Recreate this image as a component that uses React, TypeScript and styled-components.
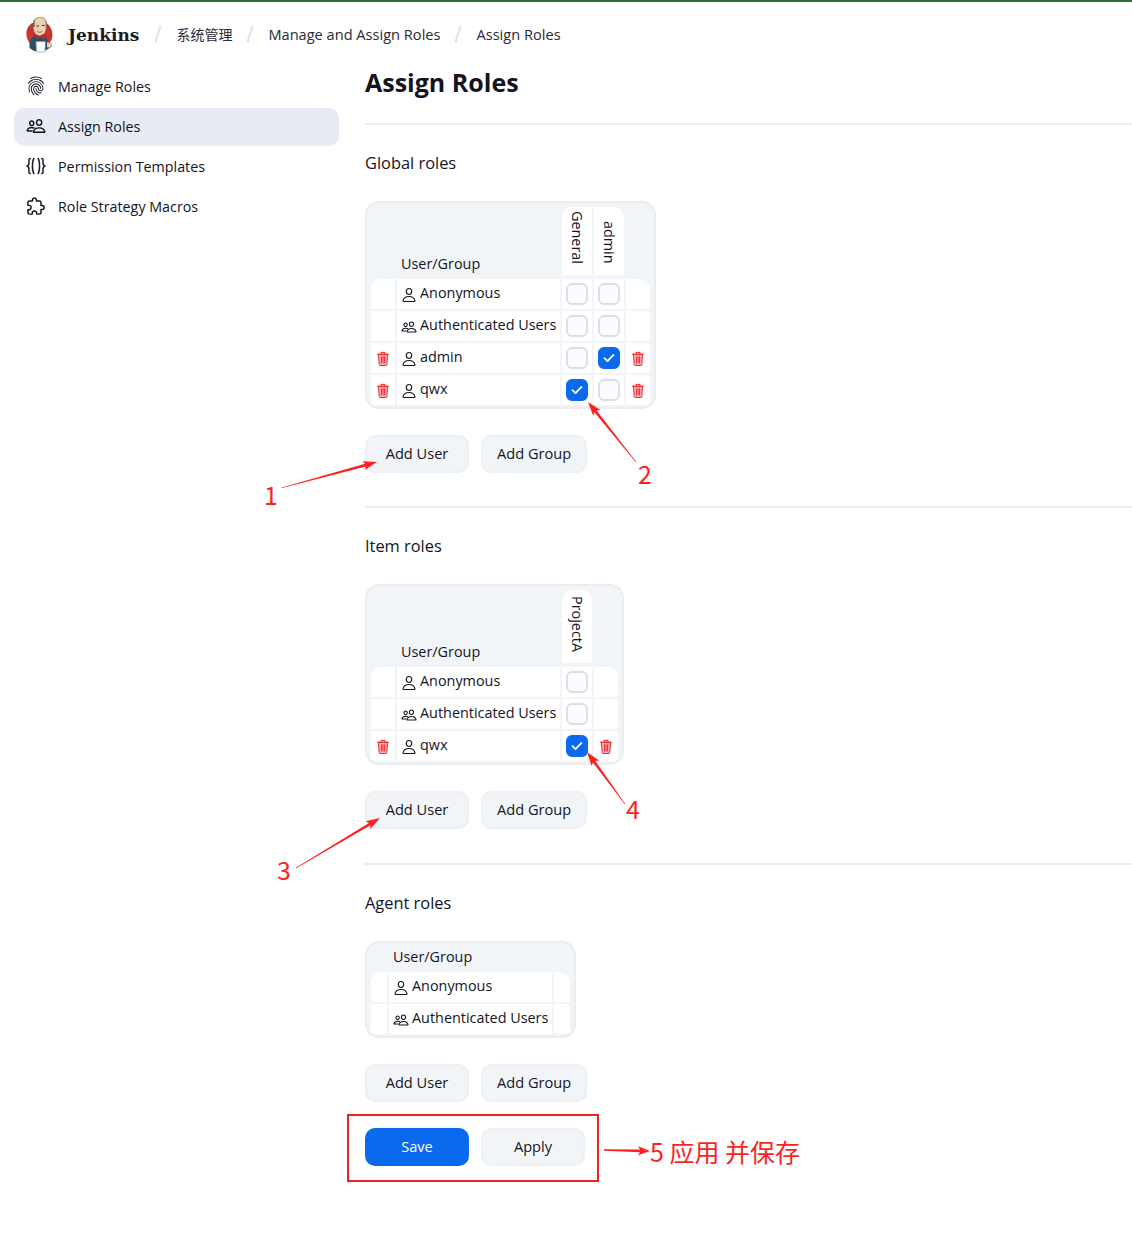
import React from "react";
import styled, { createGlobalStyle } from "styled-components";
import {
  IoFingerPrintOutline,
  IoPeopleOutline,
  IoPersonOutline,
  IoExtensionPuzzleOutline,
} from "react-icons/io5";

const FONT = `"Open Sans", "Noto Sans CJK SC", sans-serif`;
const RED = "#ff1f1f";

const Global = createGlobalStyle`
  html, body { margin: 0; padding: 0; background: #fff; }
  body { font-family: ${FONT}; color: #14141f; font-size: 14.4px; overflow-x: hidden; }
`;

const Page = styled.div`
  position: relative;
  width: 1132px;
  height: 1236px;
  overflow: hidden;
  border-top: 2px solid #2f6b3a;
  box-sizing: border-box;
`;

const Header = styled.header`
  height: 66px;
  display: flex;
  align-items: center;
  padding-left: 26px;
`;

const Brand = styled.div`
  display: flex;
  align-items: center;
  gap: 15px;
  margin-right: 18px;
`;

const BrandName = styled.span`
  font-family: "DejaVu Serif", "Liberation Serif", serif;
  font-weight: 700;
  font-size: 17px;
  color: #1c1c28;
`;

const Crumbs = styled.nav`
  display: flex;
  align-items: center;
  gap: 17px;
  font-size: 14.6px;
  color: #2a2a36;
  padding-bottom: 2px;
`;

const CjkCrumb = styled.span`
  font-size: 14px;
`;

const Slash = styled.span`
  display: block;
  width: 2px;
  height: 18px;
  background: #dfe4ed;
  transform: rotate(17deg);
`;

const Body = styled.div`
  display: flex;
`;

const Side = styled.aside`
  width: 325px;
  margin-left: 14px;
  display: flex;
  flex-direction: column;
  gap: 2px;
`;

const SideItem = styled.a<{ $active?: boolean }>`
  height: 38px;
  box-sizing: border-box;
  display: flex;
  align-items: center;
  gap: 12px;
  padding: 0 0 2px 12px;
  border-radius: 10px;
  background: ${(p) => (p.$active ? "#e7ebf3" : "transparent")};
  font-size: 14.3px;
  color: #14141f;
  svg { width: 20px; height: 20px; flex: none; }
  svg.stroked :is(path, circle, ellipse) { stroke-width: 38px; }
`;

const Main = styled.main`
  flex: 1;
  margin-left: 26px;
`;

const Title = styled.h1`
  margin: -1px 0 26px;
  font-size: 25px;
  line-height: 30px;
  font-weight: 700;
`;

const Rule = styled.hr<{ $before: number }>`
  margin: ${(p) => p.$before}px 0 27px;
  height: 2px;
  border: 0;
  background: #e9edf2;
`;

const SectionTitle = styled.h2`
  margin: 0 0 27px;
  font-size: 16.4px;
  line-height: 22px;
  font-weight: 400;
`;

const TableBox = styled.div`
  display: inline-block;
  vertical-align: top;
  box-sizing: border-box;
  background: #f2f5f8;
  border: 2px solid #e9edf2;
  border-radius: 14px;
  padding: 2px 2px 0;
`;

const Grid = styled.table`
  border-collapse: separate;
  border-spacing: 2px;
  font-size: 14.4px;
  table-layout: fixed;
`;

const NameHead = styled.th`
  padding: 0 0 2px 4px;
  font-weight: 400;
  text-align: left;
  vertical-align: bottom;
  line-height: 19px;
  border-bottom: 2px solid transparent;
`;

const BlankHead = styled.th<{ $w: number }>`
  width: ${(p) => p.$w}px;
  padding: 0;
`;

const RoleHead = styled.th<{ $first?: boolean; $last?: boolean; $h: number }>`
  width: 30px;
  height: ${(p) => p.$h}px;
  padding: 0 0 11px;
  box-sizing: content-box;
  background: #fff;
  background-clip: padding-box;
  border-bottom: 2px solid transparent;
  border-radius: ${(p) => (p.$first ? 10 : 0)}px ${(p) => (p.$last ? 10 : 0)}px 0 0;
  font-weight: 400;
  vertical-align: bottom;
`;

const VerticalText = styled.span`
  display: block;
  writing-mode: vertical-rl;
  white-space: nowrap;
  line-height: 30px;
  width: 30px;
`;

const Row = styled.tr`
  height: 30px;
  & > td { background: #fff; padding: 0; }
  & > td:first-child { border-radius: 3px 0 0 3px; }
  & > td:last-child { border-radius: 0 3px 3px 0; }
  &:first-child > td:first-child { border-top-left-radius: 10px; }
  &:first-child > td:last-child { border-top-right-radius: 10px; }
`;

const IconCell = styled.td`
  text-align: center;
  vertical-align: middle;
  line-height: 0;
`;

const NameCell = styled.td`
  width: 163px;
`;

const NameWrap = styled.div`
  display: flex;
  align-items: center;
  gap: 3px;
  padding-left: 4px;
  height: 30px;
  white-space: nowrap;
  svg { width: 16px; height: 16px; flex: none; margin-top: 1px; }
  svg :is(path, circle, ellipse) { stroke-width: 36px; }
  span { position: relative; top: -2px; }
`;

const Box = styled.span<{ $on?: boolean }>`
  display: inline-flex;
  align-items: center;
  justify-content: center;
  box-sizing: border-box;
  width: 22px;
  height: 22px;
  border-radius: 6px;
  border: 2px solid ${(p) => (p.$on ? "#0b69ee" : "#d9deea")};
  background: ${(p) => (p.$on ? "#0b69ee" : "#fcfcfe")};
`;

const Buttons = styled.div`
  display: flex;
  gap: 12px;
  margin-top: 26px;
`;

const Btn = styled.button<{ $primary?: boolean }>`
  min-width: 104px;
  height: 38px;
  box-sizing: border-box;
  padding: 0 14px 2px;
  border-radius: 10px;
  border: 2px solid ${(p) => (p.$primary ? "#0b69ee" : "#edf0f4")};
  background: ${(p) => (p.$primary ? "#0b69ee" : "#f2f5f8")};
  color: ${(p) => (p.$primary ? "#fff" : "#14141f")};
  font-family: ${FONT};
  font-size: 14.6px;
`;

const Overlay = styled.svg`
  position: absolute;
  left: 0;
  top: -2px;
  width: 1132px;
  height: 1236px;
  pointer-events: none;
`;

const Mark = styled.span<{ $x: number; $y: number }>`
  position: absolute;
  left: ${(p) => p.$x}px;
  top: ${(p) => p.$y}px;
  font-family: "Noto Sans CJK SC", "Noto Sans", sans-serif;
  font-size: 25px;
  line-height: 30px;
  color: ${RED};
  white-space: nowrap;
`;

const Frame = styled.div`
  position: absolute;
  left: 347px;
  top: 1112px;
  width: 252px;
  height: 68px;
  box-sizing: border-box;
  border: 2px solid #f0201c;
`;

const Trash = () => (
  <svg width="14" height="15" viewBox="0 0 14 15">
    <path d="M2.4 3.4h9.2l-.8 10.2a.9.9 0 0 1-.9.9H4.1a.9.9 0 0 1-.9-.9z" fill="#ffb4b4" stroke="#f0262c" strokeWidth="1" />
    <path d="M1 3.2h12M5 3V1.4h4V3M5.4 5.4v7M7 5.4v7M8.6 5.4v7" fill="none" stroke="#f0262c" strokeWidth="1" />
  </svg>
);

const Tick = () => (
  <svg width="12" height="10" viewBox="0 0 12 10">
    <path d="M1.5 5.2 4.5 8.2 10.5 1.8" fill="none" stroke="#fff" strokeWidth="1.7" strokeLinecap="round" strokeLinejoin="round" />
  </svg>
);

const Braces = () => (
  <svg viewBox="0 0 20 20" fill="none" stroke="#1c1c28" strokeWidth="1.5" strokeLinecap="round">
    <path d="M4.2 2.5C2.6 2.5 3 4 3 6s.1 3.4-1.600 4c1.700.6 1.600 2 1.600 4s-.4 3.500 1.200 3.500" />
    <path d="M7.800 2.500C6 5.500 6 14.500 7.800 17.500" />
    <path d="M12.200 2.500C14 5.500 14 14.500 12.200 17.500" />
    <path d="M15.800 2.500c1.600 0 1.200 1.500 1.200 3.500s-.1 3.400 1.600 4c-1.700.6-1.600 2-1.600 4s.4 3.500-1.200 3.500" />
  </svg>
);

const Logo = () => (
  <svg width="27" height="36" viewBox="0 0 27 36">
    <path d="M6 6C2 9 0 13 .5 18c.5 5 3 8.500 5.500 10l15 0c3-2 5.500-5.500 5.500-10 0-5-2-9-6-12z" fill="#c9332e" />
    <path d="M3.500 26c1-5 5-8 9.500-8s9 3 10 8l.5 5-5 3H8l-4.500-3z" fill="#2f4f63" />
    <path d="M7 9c0-6 3-9 7-9 4.500 0 6.500 3.500 6.500 8 0 6-2 11-6.500 11C10 19 7 15 7 9z" fill="#eecfae" stroke="#5b4a42" strokeWidth=".5" />
    <path d="M7 10C6.500 6 7.500 3 9.500 1.500 8.500 4 8.800 7 9 10zM20.500 10c.6-3 .2-5.500-1.500-7.500.8 2 1 4.500.5 7.500z" fill="#77716c" />
    <path d="M17 17l3.500 2-3 3.500-3.500-3.500zM11 18l2.500 1-1 3-3-2z" fill="#b92d2a" />
    <path d="M10 24.500h9.500l-.6 10.500H10.500z" fill="#fff" stroke="#8a8a8a" strokeWidth=".6" />
    <path d="M21 25c3 0 5 2 4.500 4s-3 2-4.500 1.500" fill="#eecfae" stroke="#555" strokeWidth=".6" />
    <path d="M10.500 9h2.500M16 8.500h2.500" stroke="#333" strokeWidth="1" />
    <path d="M11 14.500c1.500 1 4 1 5.500-.2" fill="none" stroke="#8a4a3a" strokeWidth=".8" />
  </svg>
);

type Member = { name: string; kind: "user" | "group"; removable?: boolean; checks: boolean[] };

function RoleTable({
  roles,
  headHeight,
  edge,
  members,
}: {
  roles: string[];
  headHeight: number;
  edge: number;
  members: Member[];
}) {
  return (
    <TableBox>
      <Grid>
        <thead>
          <tr>
            <BlankHead $w={edge} />
            <NameHead>User/Group</NameHead>
            {roles.map((r, i) => (
              <RoleHead key={r} $h={headHeight} $first={i === 0} $last={i === roles.length - 1}>
                <VerticalText>{r}</VerticalText>
              </RoleHead>
            ))}
            <BlankHead $w={edge} />
          </tr>
        </thead>
        <tbody>
          {members.map((m) => (
            <Row key={m.name}>
              <IconCell>{m.removable && <Trash />}</IconCell>
              <NameCell>
                <NameWrap>
                  {m.kind === "user" ? <IoPersonOutline /> : <IoPeopleOutline />}
                  <span>{m.name}</span>
                </NameWrap>
              </NameCell>
              {m.checks.map((c, i) => (
                <IconCell key={i}>
                  <Box $on={c}>{c && <Tick />}</Box>
                </IconCell>
              ))}
              <IconCell>{m.removable && <Trash />}</IconCell>
            </Row>
          ))}
        </tbody>
      </Grid>
    </TableBox>
  );
}

const arrow = (x1: number, y1: number, x2: number, y2: number, head = 12, tail = 0.3) => {
  const dx = x2 - x1;
  const dy = y2 - y1;
  const l = Math.hypot(dx, dy);
  const ux = dx / l;
  const uy = dy / l;
  const nx = -uy;
  const ny = ux;
  const bx = x2 - ux * head;
  const by = y2 - uy * head;
  const p = (x: number, y: number) => `${x.toFixed(1)},${y.toFixed(1)}`;
  return [
    p(x1 + nx * tail, y1 + ny * tail),
    p(bx + nx * 1.4, by + ny * 1.4),
    p(bx - ux * 2 + nx * 4.5, by - uy * 2 + ny * 4.5),
    p(x2, y2),
    p(bx - ux * 2 - nx * 4.5, by - uy * 2 - ny * 4.5),
    p(bx - nx * 1.4, by - ny * 1.4),
    p(x1 - nx * tail, y1 - ny * tail),
  ].join(" ");
};

export default function App() {
  return (
    <Page>
      <Global />
      <Header>
        <Brand>
          <Logo />
          <BrandName>Jenkins</BrandName>
        </Brand>
        <Crumbs>
          <Slash />
          <CjkCrumb>系统管理</CjkCrumb>
          <Slash />
          <span>Manage and Assign Roles</span>
          <Slash />
          <span>Assign Roles</span>
        </Crumbs>
      </Header>
      <Body>
        <Side>
          <SideItem><IoFingerPrintOutline />Manage Roles</SideItem>
          <SideItem $active><IoPeopleOutline className="stroked" />Assign Roles</SideItem>
          <SideItem><Braces />Permission Templates</SideItem>
          <SideItem><IoExtensionPuzzleOutline className="stroked" />Role Strategy Macros</SideItem>
        </Side>
        <Main>
          <Title>Assign Roles</Title>
          <Rule $before={0} />
          <SectionTitle>Global roles</SectionTitle>
          <RoleTable
            roles={["General", "admin"]}
            headHeight={57}
            edge={24}
            members={[
              { name: "Anonymous", kind: "user", checks: [false, false] },
              { name: "Authenticated Users", kind: "group", checks: [false, false] },
              { name: "admin", kind: "user", removable: true, checks: [false, true] },
              { name: "qwx", kind: "user", removable: true, checks: [true, false] },
            ]}
          />
          <Buttons>
            <Btn>Add User</Btn>
            <Btn>Add Group</Btn>
          </Buttons>
          <Rule $before={33} />
          <SectionTitle>Item roles</SectionTitle>
          <RoleTable
            roles={["ProjectA"]}
            headHeight={62}
            edge={24}
            members={[
              { name: "Anonymous", kind: "user", checks: [false] },
              { name: "Authenticated Users", kind: "group", checks: [false] },
              { name: "qwx", kind: "user", removable: true, checks: [true] },
            ]}
          />
          <Buttons>
            <Btn>Add User</Btn>
            <Btn>Add Group</Btn>
          </Buttons>
          <Rule $before={34} />
          <SectionTitle>Agent roles</SectionTitle>
          <RoleTable
            roles={[]}
            headHeight={0}
            edge={16}
            members={[
              { name: "Anonymous", kind: "user", checks: [] },
              { name: "Authenticated Users", kind: "group", checks: [] },
            ]}
          />
          <Buttons>
            <Btn>Add User</Btn>
            <Btn>Add Group</Btn>
          </Buttons>
          <Buttons>
            <Btn $primary>Save</Btn>
            <Btn>Apply</Btn>
          </Buttons>
        </Main>
      </Body>
      <Overlay viewBox="0 0 1132 1236">
        <polygon points={arrow(281, 488, 377, 462)} fill={RED} />
        <polygon points={arrow(636, 462, 588, 402)} fill={RED} />
        <polygon points={arrow(296, 868, 380, 818)} fill={RED} />
        <polygon points={arrow(625, 804, 587, 752)} fill={RED} />
        <polygon points={arrow(604, 1150, 650, 1151, 10, 0.8)} fill={RED} />
      </Overlay>
      <Mark $x={264} $y={477}>1</Mark>
      <Mark $x={638} $y={456}>2</Mark>
      <Mark $x={277} $y={852}>3</Mark>
      <Mark $x={626} $y={791}>4</Mark>
      <Mark $x={650} $y={1134}>5 应用 并保存</Mark>
      <Frame />
    </Page>
  );
}
